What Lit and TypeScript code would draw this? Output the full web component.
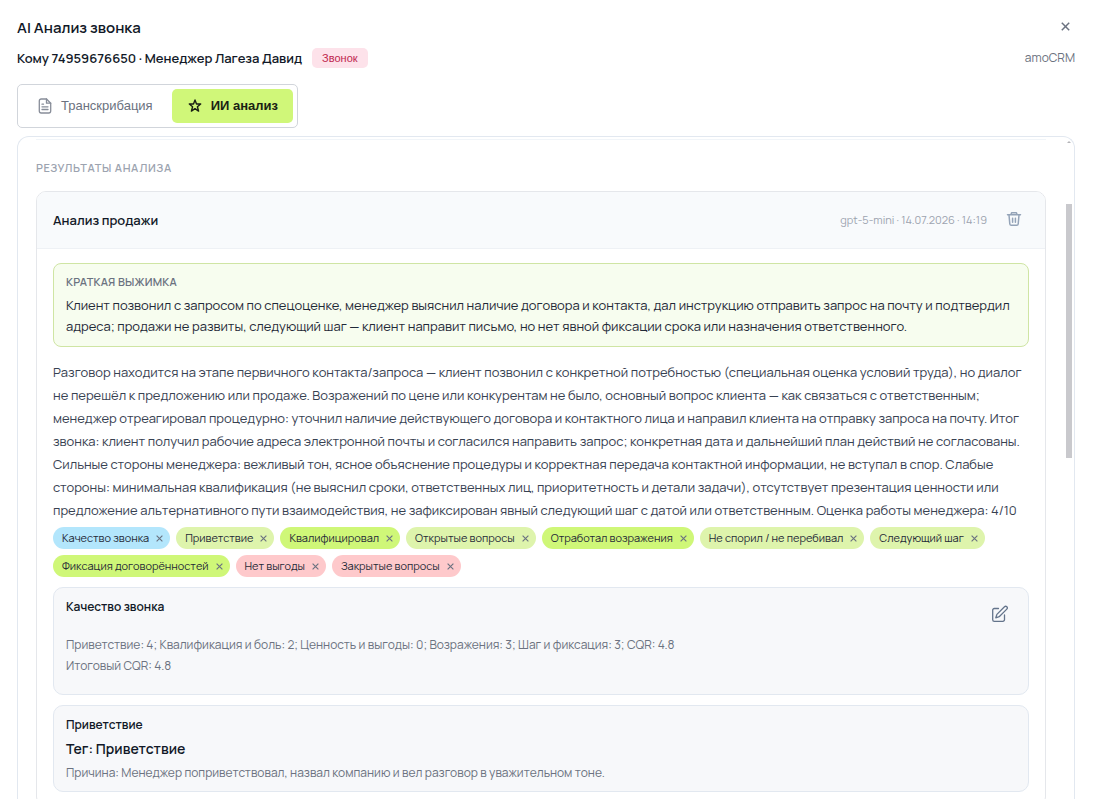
import { LitElement, html, svg, css } from "lit";
import { customElement, state } from "lit/decorators.js";
import { classMap } from "lit/directives/class-map.js";

type Tone = "sky" | "soft" | "lime" | "rose";
interface Tag { label: string; tone: Tone; }

const SUMMARY =
  "Клиент позвонил с запросом по спецоценке, менеджер выяснил наличие договора и контакта, дал инструкцию отправить запрос на почту и подтвердил " +
  "адреса; продажи не развиты, следующий шаг — клиент направит письмо, но нет явной фиксации срока или назначения ответственного.";

const DETAILS =
  "Разговор находится на этапе первичного контакта/запроса — клиент позвонил с конкретной потребностью (специальная оценка условий труда), но диалог " +
  "не перешёл к предложению или продаже. Возражений по цене или конкурентам не было, основный вопрос клиента — как связаться с ответственным; " +
  "менеджер отреагировал процедурно: уточнил наличие действующего договора и контактного лица и направил клиента на отправку запроса на почту. Итог " +
  "звонка: клиент получил рабочие адреса электронной почты и согласился направить запрос; конкретная дата и дальнейший план действий не согласованы. " +
  "Сильные стороны менеджера: вежливый тон, ясное объяснение процедуры и корректная передача контактной информации, не вступал в спор. Слабые " +
  "стороны: минимальная квалификация (не выяснил сроки, ответственных лиц, приоритетность и детали задачи), отсутствует презентация ценности или " +
  "предложение альтернативного пути взаимодействия, не зафиксирован явный следующий шаг с датой или ответственным. Оценка работы менеджера: 4/10";

const fileIcon = svg`<svg class="file" width="16" height="16" viewBox="0 0 16 16" fill="none" stroke="currentColor" stroke-width="1.3" stroke-linecap="round" stroke-linejoin="round"><path d="M9.500 1H4.200A1.900 1.900 0 0 0 2.300 2.900v10.200A1.900 1.900 0 0 0 4.200 15h7.600a1.900 1.900 0 0 0 1.900-1.900V5.200z"/><path d="M9.500 1v4.200h4.200M5 6.200h1.500M5 8.800h6M5 11.500h6"/></svg>`;
const starIcon = svg`<svg width="16" height="16" viewBox="0 0 16 16" fill="none" stroke="currentColor" stroke-width="1.400" stroke-linejoin="round"><path d="M8 2l1.500 4h4.200L10.400 8.700l1.200 4.400L8 10.600l-3.600 2.500 1.200-4.400L2.300 6h4.200z"/></svg>`;
const trashIcon = svg`<svg width="16" height="16" viewBox="0 0 16 16" fill="none" stroke="currentColor" stroke-width="1.500" stroke-linecap="round" stroke-linejoin="round"><path d="M1.500 3.800h13M5 3.500l.6-1.800h4.800l.6 1.800M3 4l.8 9a1.500 1.500 0 0 0 1.500 1.300h5.400a1.500 1.500 0 0 0 1.500-1.300l.8-9M6.600 7.200v4M9.400 7.200v4"/></svg>`;
const editIcon = svg`<svg width="18" height="18" viewBox="0 0 18 18" fill="none" stroke="currentColor" stroke-width="1.300" stroke-linecap="round" stroke-linejoin="round"><path d="M7.500 3.500H3.300A1.600 1.600 0 0 0 1.700 5.100v9.600a1.600 1.600 0 0 0 1.600 1.600h8.600a1.600 1.600 0 0 0 1.600-1.600V10"/><path d="M13.500 1.800a1.600 1.600 0 0 1 2.300 2.300L8.200 11.700l-3.400 1.100 1.100-3.400z"/></svg>`;

@customElement("app-root")
export class AppRoot extends LitElement {
  @state() private tab: "text" | "ai" = "ai";
  @state() private tags: Tag[] = [
    { label: "Качество звонка", tone: "sky" },
    { label: "Приветствие", tone: "soft" },
    { label: "Квалифицировал", tone: "lime" },
    { label: "Открытые вопросы", tone: "soft" },
    { label: "Отработал возражения", tone: "lime" },
    { label: "Не спорил / не перебивал", tone: "soft" },
    { label: "Следующий шаг", tone: "soft" },
    { label: "Фиксация договорённостей", tone: "lime" },
    { label: "Нет выгоды", tone: "rose" },
    { label: "Закрытые вопросы", tone: "rose" },
  ];

  static styles = css`
    :host { display: flex; flex-direction: column; box-sizing: border-box; height: 100vh; overflow: hidden; padding: 16px 18px 0 17px; background: #fff; color: #111827; font-family: Manrope, Inter, sans-serif; font-size: 13px; line-height: 20px; }
    * { box-sizing: border-box; }
    h1, h2, h3, h4, p { margin: 0; font-weight: 600; }
    button { font: inherit; border: 0; background: none; padding: 0; color: inherit; cursor: pointer; }
    svg { display: block; flex: none; }
    .row { display: flex; align-items: center; justify-content: space-between; }
    h1 { font-size: 15px; line-height: 24px; }
    .top { align-items: flex-start; }
    .close { width: 19px; height: 21px; display: grid; place-items: center; color: #6b7280; }
    .meta { padding-top: 8px; }
    .who { display: flex; align-items: center; gap: 10px; }
    .who h2 { font-size: 13px; }
    .badge { background: #fde2ea; color: #c0264f; border-radius: 5px; padding: 0 10px; font: 11px/20px "Liberation Sans", sans-serif; }
    .crm { color: #6b7280; font-size: 12px; }
    .tabs { display: flex; align-self: flex-start; gap: 4px; margin-top: 16px; padding: 4px; border: 1px solid #d1d5db; border-radius: 5px; font: 13px/18px "Liberation Sans", sans-serif; }
    .tab { display: flex; align-items: center; gap: 8px; height: 34px; padding: 0 15px; border-radius: 5px; color: #6b7280; }
    .file { opacity: 0.8; }
    .on { background: #d0f779; color: #1a1f14; font-weight: 700; }
    .panel { display: flex; flex: 1; min-height: 0; overflow: hidden; margin-top: 8px; border: 1px solid #e2e8f0; border-bottom: 0; border-radius: 12px 12px 0 0; padding: 2px 0 0 18px; }
    .content { flex: 1; min-width: 0; border-top: 1px solid #f1f5f9; }
    .bar { display: flex; flex-direction: column; align-items: center; width: 6px; margin: 2px 2px 0 20px; }
    .arrow { width: 4px; height: 2px; border: 2px solid transparent; border-top: 0; border-bottom-color: #b4b4b8; }
    .thumb { width: 6px; height: 254px; margin-top: 61px; background: #c9c9cd; }
    .label { font-size: 11px; line-height: 16px; font-weight: 600; color: #9ca3af; padding: 20px 0 15px; text-transform: uppercase; letter-spacing: 0.06em; }
    .card { border: 1px solid #e5e7eb; border-radius: 10px; }
    .card-head { height: 57px; padding: 0 23px 0 16px; background: #f8fafc; border-bottom: 1px solid #eef1f5; border-radius: 9px 9px 0 0; }
    .card-head h3 { font-size: 13px; }
    .info { display: flex; align-items: center; gap: 19px; color: #9ca3af; font-size: 11px; }
    .trash { color: #94a3b8; padding-bottom: 2px; }
    .card-body { padding: 14px 16px; }
    .summary { border: 1px solid #cfe5a4; border-radius: 8px; background: #f7fdef; padding: 10px 12px 9px; color: #1f2937; line-height: 21px; }
    .summary h4 { font-size: 11px; font-weight: 600; line-height: 16px; margin-bottom: 5px; color: #6b7280; text-transform: uppercase; letter-spacing: 0.02em; }
    .summary p, .details { font-weight: 400; font-size: 13px; }
    .details { color: #374151; line-height: 23px; padding: 14px 0 5px; }
    .chips { display: flex; flex-wrap: wrap; gap: 6px; }
    .chip { display: flex; align-items: center; gap: 7px; height: 22px; border-radius: 11px; padding: 0 7px 0 9px; font-size: 11px; color: #1f2937; }
    .chip button { color: #6b7280; }
    .sky { background: #b3e6fc; }
    .soft { background: #def4ac; }
    .lime { background: #cff778; }
    .rose { background: #fec9cb; }
    .block { display: flex; justify-content: space-between; align-items: flex-start; margin-top: 10px; border: 1px solid #e2e8f0; border-radius: 10px; background: #f7f8fa; padding: 10px 12px 8px; color: #6b7280; font-size: 12px; line-height: 21px; }
    .block p { font-weight: 400; }
    .block h4 { font-size: 12px; line-height: 18px; color: #111827; }
    .scores { padding: 18px 0 10px; }
    .edit { color: #64748b; padding: 7px 7px 0 0; }
    .tagname { font-size: 14px; line-height: 22px; color: #111827; padding: 4px 0 2px; }
  `;

  private cross(size: number, width: number) {
    return html`<svg width=${size} height=${size} viewBox="0 0 8 8" fill="none" stroke="currentColor" stroke-width=${width}><path d="M.7.7l6.600 6.600M7.300.7L.7 7.300"/></svg>`;
  }

  render() {
    return html`
      <header class="row top"><h1>AI Анализ звонка</h1><button class="close" aria-label="Закрыть">${this.cross(9, 1.3)}</button></header>
      <div class="row meta">
        <div class="who"><h2>Кому 74959676650 · Менеджер Лагеза Давид</h2><span class="badge">Звонок</span></div>
        <span class="crm">amoCRM</span>
      </div>
      <nav class="tabs">
        <button class=${classMap({ tab: true, on: this.tab === "text" })} @click=${() => (this.tab = "text")}>${fileIcon}Транскрибация</button>
        <button class=${classMap({ tab: true, on: this.tab === "ai" })} @click=${() => (this.tab = "ai")}>${starIcon}ИИ анализ</button>
      </nav>
      <main class="panel">
        <div class="content">
          <h2 class="label">Результаты анализа</h2>
          <article class="card">
            <div class="row card-head">
              <h3>Анализ продажи</h3>
              <div class="info"><span>gpt-5-mini · 14.07.2026 · 14:19</span><button class="trash" aria-label="Удалить">${trashIcon}</button></div>
            </div>
            <div class="card-body">
              <section class="summary"><h4>Краткая выжимка</h4><p>${SUMMARY}</p></section>
              <p class="details">${DETAILS}</p>
              <div class="chips">${this.tags.map((t) => html`<span class="chip ${t.tone}">${t.label}<button aria-label="Убрать" @click=${() => (this.tags = this.tags.filter((x) => x !== t))}>${this.cross(7, 1.3)}</button></span>`)}</div>
              <section class="block">
                <div><h4>Качество звонка</h4><div class="scores"><p>Приветствие: 4; Квалификация и боль: 2; Ценность и выгоды: 0; Возражения: 3; Шаг и фиксация: 3; CQR: 4.8</p><p>Итоговый CQR: 4.8</p></div></div>
                <button class="edit" aria-label="Изменить">${editIcon}</button>
              </section>
              <section class="block">
                <div><h4>Приветствие</h4><h3 class="tagname">Тег: Приветствие</h3><p>Причина: Менеджер поприветствовал, назвал компанию и вел разговор в уважительном тоне.</p></div>
              </section>
            </div>
          </article>
        </div>
        <div class="bar"><span class="arrow"></span><span class="thumb"></span></div>
      </main>`;
  }
}
